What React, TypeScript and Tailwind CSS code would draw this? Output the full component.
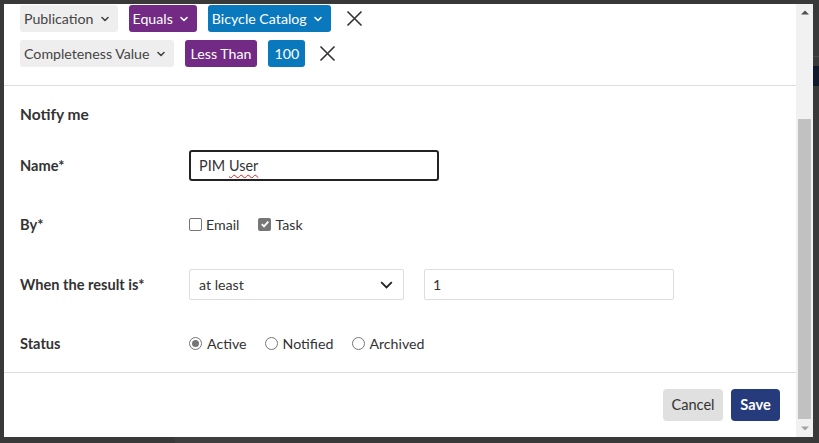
import React from "react";

const Chevron = ({ className = "" }: { className?: string }) => (
  <svg width="8" height="6" viewBox="0 0 8 6" className={className} fill="none">
    <path d="M1 1.5L4 4.5L7 1.5" stroke="currentColor" strokeWidth="1.6" strokeLinecap="round" strokeLinejoin="round" />
  </svg>
);

const XIcon = () => (
  <svg width="17" height="17" viewBox="0 0 17 17" fill="none">
    <path d="M1.5 1.5L15.5 15.5M15.5 1.5L1.5 15.5" stroke="#333" strokeWidth="1.6" />
  </svg>
);

const Chip = ({
  label,
  tone,
  chevron = true,
}: {
  label: string;
  tone: "gray" | "purple" | "blue";
  chevron?: boolean;
}) => {
  const toneCls =
    tone === "gray"
      ? "bg-[#eeeeee] text-[#444]"
      : tone === "purple"
      ? "bg-[#722a84] text-white"
      : "bg-[#0a78bd] text-white";
  return (
    <div className={`h-[27px] flex items-center gap-[7px] rounded-[3px] ${chevron ? "pl-[4px] pr-[9px]" : "px-[6px]"} text-[14.2px] ${toneCls}`}>
      <span>{label}</span>
      {chevron && <Chevron />}
    </div>
  );
};

const Checkbox = ({ checked }: { checked?: boolean }) =>
  checked ? (
    <div className="w-[13px] h-[13px] rounded-[2px] bg-[#767676] flex items-center justify-center">
      <svg width="10" height="10" viewBox="0 0 10 10" fill="none">
        <path d="M1.8 5.2L4 7.4L8.3 2.6" stroke="white" strokeWidth="1.8" />
      </svg>
    </div>
  ) : (
    <div className="w-[13px] h-[13px] rounded-[2px] border border-[#767676] bg-white" />
  );

const Radio = ({ checked }: { checked?: boolean }) => (
  <div className="w-[13px] h-[13px] rounded-full border border-[#767676] bg-white flex items-center justify-center">
    {checked && <div className="w-[7px] h-[7px] rounded-full bg-[#767676]" />}
  </div>
);

export default function App() {
  return (
    <div className="w-[819px] h-[443px] bg-[#393939] overflow-hidden relative font-['Lato',sans-serif] text-[#333]">
      {/* faint page behind the overlay */}
      <div className="absolute right-0 top-[66px] w-[6px] h-[20px] bg-[#101a2b]" />
      <div className="absolute right-0 top-[56px] w-[6px] h-[1px] bg-[#4a4a4a]" />
      <div className="absolute left-[175px] bottom-0 w-[105px] h-[6px] bg-[#3f3f3f]" />

      <div className="relative pl-[4px] pt-[4px]">
        <div className="w-[809px] h-[433px] bg-white flex">
          <div className="flex-1 flex flex-col">
            {/* filters */}
            <div className="pl-[16px] pt-[1px] pb-[18px] flex flex-col gap-[8px] border-b border-[#dddddd]">
              <div className="flex items-center">
                <Chip label="Publication" tone="gray" />
                <div className="ml-[11px]"><Chip label="Equals" tone="purple" /></div>
                <div className="ml-[11px]"><Chip label="Bicycle Catalog" tone="blue" /></div>
                <div className="ml-[15px]"><XIcon /></div>
              </div>
              <div className="flex items-center">
                <Chip label="Completeness Value" tone="gray" />
                <div className="ml-[11px]"><Chip label="Less Than" tone="purple" chevron={false} /></div>
                <div className="ml-[11px]"><Chip label="100" tone="blue" chevron={false} /></div>
                <div className="ml-[14px]"><XIcon /></div>
              </div>
            </div>

            {/* notify me */}
            <div className="pl-[16px] pt-[18px] pb-[13px] border-b border-[#dddddd]">
              <div className="h-[20px] leading-[20px] text-[15.5px] font-bold">Notify me</div>

              <div className="mt-[26px] h-[31px] flex items-center">
                <div className="w-[169px] text-[14.6px] font-bold">Name*</div>
                <div className="w-[250px] h-[31px] border-2 border-[#222] rounded-[3px] flex items-center pl-[8px] text-[14.4px]">
                  PIM <span className="ml-[4px] underline decoration-wavy decoration-[#e02020] decoration-[1px] underline-offset-[3px]">User</span>
                </div>
              </div>

              <div className="mt-[28px] h-[31px] flex items-center">
                <div className="w-[169px] text-[14.6px] font-bold">By*</div>
                <div className="flex items-center text-[14.2px]">
                  <Checkbox />
                  <span className="ml-[4px]">Email</span>
                  <div className="ml-[19px]"><Checkbox checked /></div>
                  <span className="ml-[4px]">Task</span>
                </div>
              </div>

              <div className="mt-[29px] h-[31px] flex items-center">
                <div className="w-[169px] text-[14.6px] font-bold">When the result is*</div>
                <div className="w-[215px] h-[31px] border border-[#dddddd] rounded-[2px] flex items-center justify-between pl-[9px] pr-[10px] text-[14.2px]">
                  <span>at least</span>
                  <svg width="13" height="8" viewBox="0 0 13 8" fill="none">
                    <path d="M1.2 1.2L6.5 6.5L11.8 1.2" stroke="#222" strokeWidth="1.8" />
                  </svg>
                </div>
                <div className="ml-[20px] w-[250px] h-[31px] border border-[#dddddd] rounded-[2px] flex items-center pl-[8px] text-[14.2px]">
                  1
                </div>
              </div>

              <div className="mt-[28px] h-[31px] flex items-center">
                <div className="w-[169px] text-[14.6px] font-bold">Status</div>
                <div className="flex items-center text-[14.2px]">
                  <Radio checked />
                  <span className="ml-[5px]">Active</span>
                  <div className="ml-[18px]"><Radio /></div>
                  <span className="ml-[5px]">Notified</span>
                  <div className="ml-[19px]"><Radio /></div>
                  <span className="ml-[4px]">Archived</span>
                </div>
              </div>
            </div>

            {/* footer */}
            <div className="flex justify-end items-center gap-[8px] pr-[16px] pt-[16px]">
              <button className="h-[32px] w-[60px] rounded-[4px] bg-[#e0e0e0] text-[14.6px] text-[#333]">Cancel</button>
              <button className="h-[32px] w-[49px] rounded-[4px] bg-[#253b7b] text-[14.6px] font-bold text-white">Save</button>
            </div>
          </div>

          {/* scrollbar */}
          <div className="w-[17px] bg-[#f1f1f1] flex flex-col">
            <div className="h-[17px] flex items-center justify-center">
              <svg width="8" height="5" viewBox="0 0 8 5"><path d="M0 4.5L4 0.5L8 4.5Z" fill="#505050" /></svg>
            </div>
            <div className="flex-1 relative">
              <div className="mt-[98px] mx-[2px] h-[300px] bg-[#c1c1c1]" />
            </div>
            <div className="h-[17px] flex items-center justify-center">
              <svg width="8" height="5" viewBox="0 0 8 5"><path d="M0 0.5L4 4.5L8 0.5Z" fill="#a3a3a3" /></svg>
            </div>
          </div>
        </div>
      </div>
    </div>
  );
}
